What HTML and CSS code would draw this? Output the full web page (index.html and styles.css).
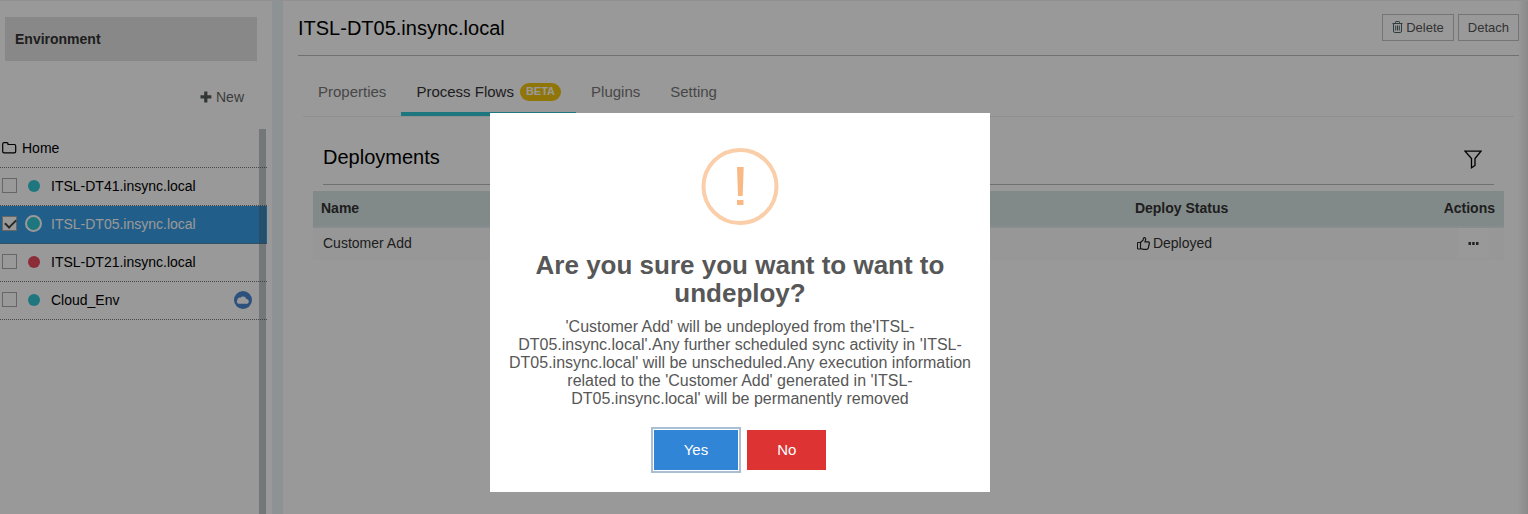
FILE: index.html
```html
<!DOCTYPE html>
<html lang="en">
<head>
<meta charset="utf-8">
<title>Environment</title>
<link rel="stylesheet" href="styles.css">
</head>
<body>
<div class="app">
  <aside class="sidebar">
    <h2 class="sidebar-title">Environment</h2>
    <button class="new-button" type="button">
      <svg width="12" height="12" viewBox="0 0 12 12" aria-hidden="true"><path d="M4.2 0.5h3.2v3.7h4v3.2h-4v4H4.200v-4H0.500V4.200h3.700z" fill="#555b5b"/></svg>
      New
    </button>
    <ul class="env-list">
      <li class="env-row env-home">
        <svg width="15" height="12" viewBox="0 0 15 12" aria-hidden="true"><path d="M0.700 9.500V2.200Q0.700 0.700 2.200 0.700h2.600Q6 0.700 6 2v0.500h6.300q1.400 0 1.400 1.400v5.600q0 1.400-1.400 1.400H2.100q-1.400 0-1.400-1.400z" fill="none" stroke="#000" stroke-width="1.200"/></svg>
        <a class="env-name" href="#home">Home</a>
      </li>
      <li class="env-row">
        <input class="env-check" type="checkbox" id="env1">
        <span class="dot"></span>
        <label class="env-name" for="env1">ITSL-DT41.insync.local</label>
      </li>
      <li class="env-row selected">
        <input class="env-check" type="checkbox" id="env2" checked>
        <span class="dot ring"></span>
        <label class="env-name" for="env2">ITSL-DT05.insync.local</label>
      </li>
      <li class="env-row">
        <input class="env-check" type="checkbox" id="env3">
        <span class="dot red"></span>
        <label class="env-name" for="env3">ITSL-DT21.insync.local</label>
      </li>
      <li class="env-row">
        <input class="env-check" type="checkbox" id="env4">
        <span class="dot"></span>
        <label class="env-name" for="env4">Cloud_Env</label>
        <svg class="cloud" width="18" height="18" viewBox="0 0 18 18" aria-hidden="true"><circle cx="9" cy="9" r="9" fill="#4b88d0"/><path d="M5 12.800a2.300 2.300 0 0 1-1.600-3.800 2.400 2.400 0 0 1 3-2.300 3.400 3.400 0 0 1 6 1.400A2.500 2.500 0 0 1 13.500 12.800z" fill="#fff"/></svg>
      </li>
      <li class="scroll-thumb" aria-hidden="true"></li>
    </ul>
  </aside>
  <main class="main">
    <header class="page-head">
      <h1 class="page-title">ITSL-DT05.insync.local</h1>
      <div class="head-actions">
        <button class="outline-button" type="button">
          <svg width="11" height="12" viewBox="0 0 11 12" aria-hidden="true"><path d="M0.500 2.500h10M3.500 2.500V1.200q0-.7.7-.7h2.600q.7 0 .7.700v1.300M1.500 2.500v7.500q0 1.500 1.300 1.500h5.400q1.300 0 1.300-1.500V2.500M3.700 4.500v5M5.500 4.500v5M7.300 4.500v5" fill="none" stroke="#4e6563"/></svg>
          Delete
        </button>
        <button class="outline-button" type="button">Detach</button>
      </div>
    </header>
    <nav class="tabs">
      <a class="tab" href="#properties">Properties</a>
      <a class="tab active" href="#flows">Process Flows <span class="badge">BETA</span></a>
      <a class="tab" href="#plugins">Plugins</a>
      <a class="tab" href="#setting">Setting</a>
    </nav>
    <section class="deployments">
      <div class="section-head">
        <h2 class="section-title">Deployments</h2>
        <button class="filter-button" type="button" aria-label="Filter">
          <svg width="18" height="19" viewBox="0 0 18 19" aria-hidden="true"><path d="M1 1.200h16L11 8.500v7l-3.500 2.300V8.500z" fill="none" stroke="#000" stroke-width="1.300"/></svg>
        </button>
      </div>
      <table class="table">
        <thead>
          <tr><th class="col-name">Name</th><th class="col-status">Deploy Status</th><th class="col-actions">Actions</th></tr>
        </thead>
        <tbody>
          <tr>
            <td class="cell-name">Customer Add</td>
            <td class="cell-status"><span class="status"><svg width="13" height="13" viewBox="0 0 13 13" aria-hidden="true"><path d="M3.500 5.500L6 3.200Q6.300 0.600 7.200 0.600q1.800 0 1.300 2.600l-.5 1.600h3.300q1.400.3 1 1.700l-1 4.500q-.4 1.300-1.700 1.300H6.500L3.500 11.500z" fill="none" stroke="#222" stroke-width="1.200"/><path d="M0.500 5.500h3v6.500H0.500z" fill="none" stroke="#222"/></svg>Deployed</span></td>
            <td class="cell-actions"><button class="more-button" type="button" aria-label="More"><svg width="11" height="3" viewBox="0 0 11 3" aria-hidden="true"><path d="M0.500 0h2.500v3h-2.500zM4.200 0h2.500v3H4.200zM8 0h2.500v3H8z" fill="#3c3c44"/></svg></button></td>
          </tr>
        </tbody>
      </table>
    </section>
  </main>
</div>
<div class="overlay">
  <div class="dialog" role="alertdialog" aria-labelledby="dialog-title" aria-describedby="dialog-text">
    <svg class="warning" width="78" height="78" viewBox="0 0 78 78" aria-hidden="true"><circle cx="39" cy="39.500" r="36.500" fill="none" stroke="#fbceaa" stroke-width="4"/><path d="M36 20h6.700l-1 29h-4.700zM36 53h6.500v5h-6.500z" fill="#f9b985"/></svg>
    <h2 class="dialog-title" id="dialog-title">Are you sure you want to want to undeploy?</h2>
    <p class="dialog-text" id="dialog-text">'Customer Add' will be undeployed from the'ITSL-DT05.insync.local'.Any further scheduled sync activity in 'ITSL-DT05.insync.local' will be unscheduled.Any execution information related to the 'Customer Add' generated in 'ITSL-DT05.insync.local' will be permanently removed</p>
    <div class="dialog-actions">
      <button class="dialog-button yes" type="button">Yes</button>
      <button class="dialog-button no" type="button">No</button>
    </div>
  </div>
</div>
</body>
</html>
```

FILE: styles.css
```css
* { box-sizing: border-box; }
body {
  margin: 0;
  font: 14px/20px "Liberation Sans", Arial, sans-serif;
  color: #333;
  background: #fff;
}
h1, h2, p, ul { margin: 0; padding: 0; font-weight: normal; }
ul { list-style: none; }
a { color: inherit; text-decoration: none; }
button { font-family: inherit; cursor: pointer; }

.app {
  display: flex;
  min-height: 100vh;
  border-top: 1px solid #f0f0f0;
}
.sidebar {
  display: flex;
  flex-direction: column;
  flex: 0 0 272px;
  padding: 16px 5px 0 0;
}
.sidebar-title {
  margin: 0 10px 0 5px;
  padding: 12px 10px;
  background: #e3e3e3;
  font-size: 14px;
  font-weight: bold;
}
.new-button {
  display: flex;
  align-items: center;
  align-self: flex-end;
  gap: 4px;
  margin: 26px 23px 22px 0;
  padding: 0;
  border: 0;
  background: none;
  color: #666;
  font-size: 14px;
  line-height: 20px;
}
.env-list { position: relative; flex: 1; }
.env-row {
  display: flex;
  align-items: center;
  height: 38px;
  padding: 0 0 2px 2px;
  border-bottom: 1px dotted #777;
  color: #000;
}
.env-home { height: 39px; gap: 5px; padding-bottom: 0; }
.selected { background: #389de4; color: #fff; }
.env-check {
  appearance: none;
  width: 15px;
  height: 15px;
  margin: 0;
  border: 1px solid #aaa;
  background: #fff;
}
.env-check:checked::after {
  content: "";
  display: block;
  width: 9px;
  height: 5px;
  margin: 2px;
  border: solid #444;
  border-width: 0 0 2px 2px;
  transform: rotate(-45deg);
}
.dot {
  width: 12px;
  height: 12px;
  margin: 0 11px;
  border-radius: 50%;
  background: #33c6d2;
}
.ring {
  width: 17px;
  height: 17px;
  margin: 0 9px 0 8px;
  border: 2px solid #fff;
}
.red { background: #e84a5b; }
.cloud { margin: 0 15px 0 auto; }
.scroll-thumb {
  position: absolute;
  top: 0;
  bottom: 0;
  right: 1px;
  width: 7px;
  background: rgba(74, 92, 98, 0.35);
}

.main {
  flex: 1;
  padding: 0 9px 0 15px;
  border-left: 11px solid #ebf5f7;
  background: linear-gradient(to left, #e6e6e6, #fff 10px);
}
.page-head {
  display: flex;
  align-items: center;
  justify-content: space-between;
  height: 55px;
  border-bottom: 1px solid #bbb;
}
.page-title, .section-title { color: #000; font-size: 20px; line-height: 24px; }
.head-actions { display: flex; gap: 4px; margin-bottom: 2px; }
.outline-button {
  display: flex;
  align-items: center;
  gap: 3px;
  height: 27px;
  padding: 0 9px;
  border: 1px solid #c4c4c4;
  background: none;
  color: #555;
  font-size: 13px;
}
.tabs {
  display: flex;
  height: 61px;
  margin: 0 5px;
  padding-top: 16px;
  border-bottom: 1px solid #eee;
}
.tab {
  display: flex;
  align-items: center;
  gap: 6px;
  padding: 0 15px;
  border-bottom: 4px solid transparent;
  color: #777;
  font-size: 15px;
}
.active { border-color: #33c6d2; color: #333; }
.badge {
  height: 18px;
  padding: 0 6px;
  border-radius: 9px;
  background: #f1c40f;
  color: #fff;
  font-size: 11px;
  line-height: 17px;
  font-weight: bold;
}
.deployments { padding: 24px 15px 0; }
.section-head {
  display: flex;
  justify-content: space-between;
  height: 44px;
  margin: 0 10px 6px;
  padding: 4px 0 14px;
  border-bottom: 1px solid #bbb;
}
.filter-button { display: flex; padding: 5px 12px 0; border: 0; background: none; }
.table { width: 100%; border-collapse: collapse; table-layout: fixed; background: #fcfcfc; }
.table th {
  padding: 7px 9px 8px 8px;
  border-bottom: 2px solid #e2ecee;
  background: #d9e6e4;
  text-align: left;
}
.table .col-name { width: 68%; }
.table .col-status { width: 18%; padding-left: 12px; }
.table .col-actions { text-align: right; }
.table td { padding: 0 10px 2px; }
.table .cell-status { padding-left: 14px; }
.table .cell-actions { padding: 0 15px 2px 0; }
.status { display: flex; align-items: center; gap: 3px; }
.more-button {
  display: flex;
  align-items: center;
  justify-content: center;
  width: 31px;
  height: 30px;
  margin-left: auto;
  border: 0;
  background: #fff;
}

.overlay {
  position: fixed;
  inset: 0;
  display: flex;
  align-items: center;
  justify-content: center;
  padding: 91px 48px 0 0;
  background: rgba(0, 0, 0, 0.4);
}
.dialog {
  width: 500px;
  padding: 34px 17px 22px;
  background: #fff;
  color: #575757;
  text-align: center;
}
.warning { display: block; margin: 0 auto 26px; }
.dialog-title { font-size: 26px; line-height: 28px; font-weight: bold; }
.dialog-text { margin-top: 11px; font-size: 16px; line-height: 18px; }
.dialog-actions { display: flex; justify-content: center; gap: 9px; margin-top: 22px; }
.dialog-button {
  height: 40px;
  padding: 0 30px 2px;
  border: 0;
  color: #fff;
  font-size: 15px;
}
.yes { background: #3085d6; box-shadow: 0 0 0 1px #fff, 0 0 0 3px #a9bfd3; }
.no { background: #d33; }
```
